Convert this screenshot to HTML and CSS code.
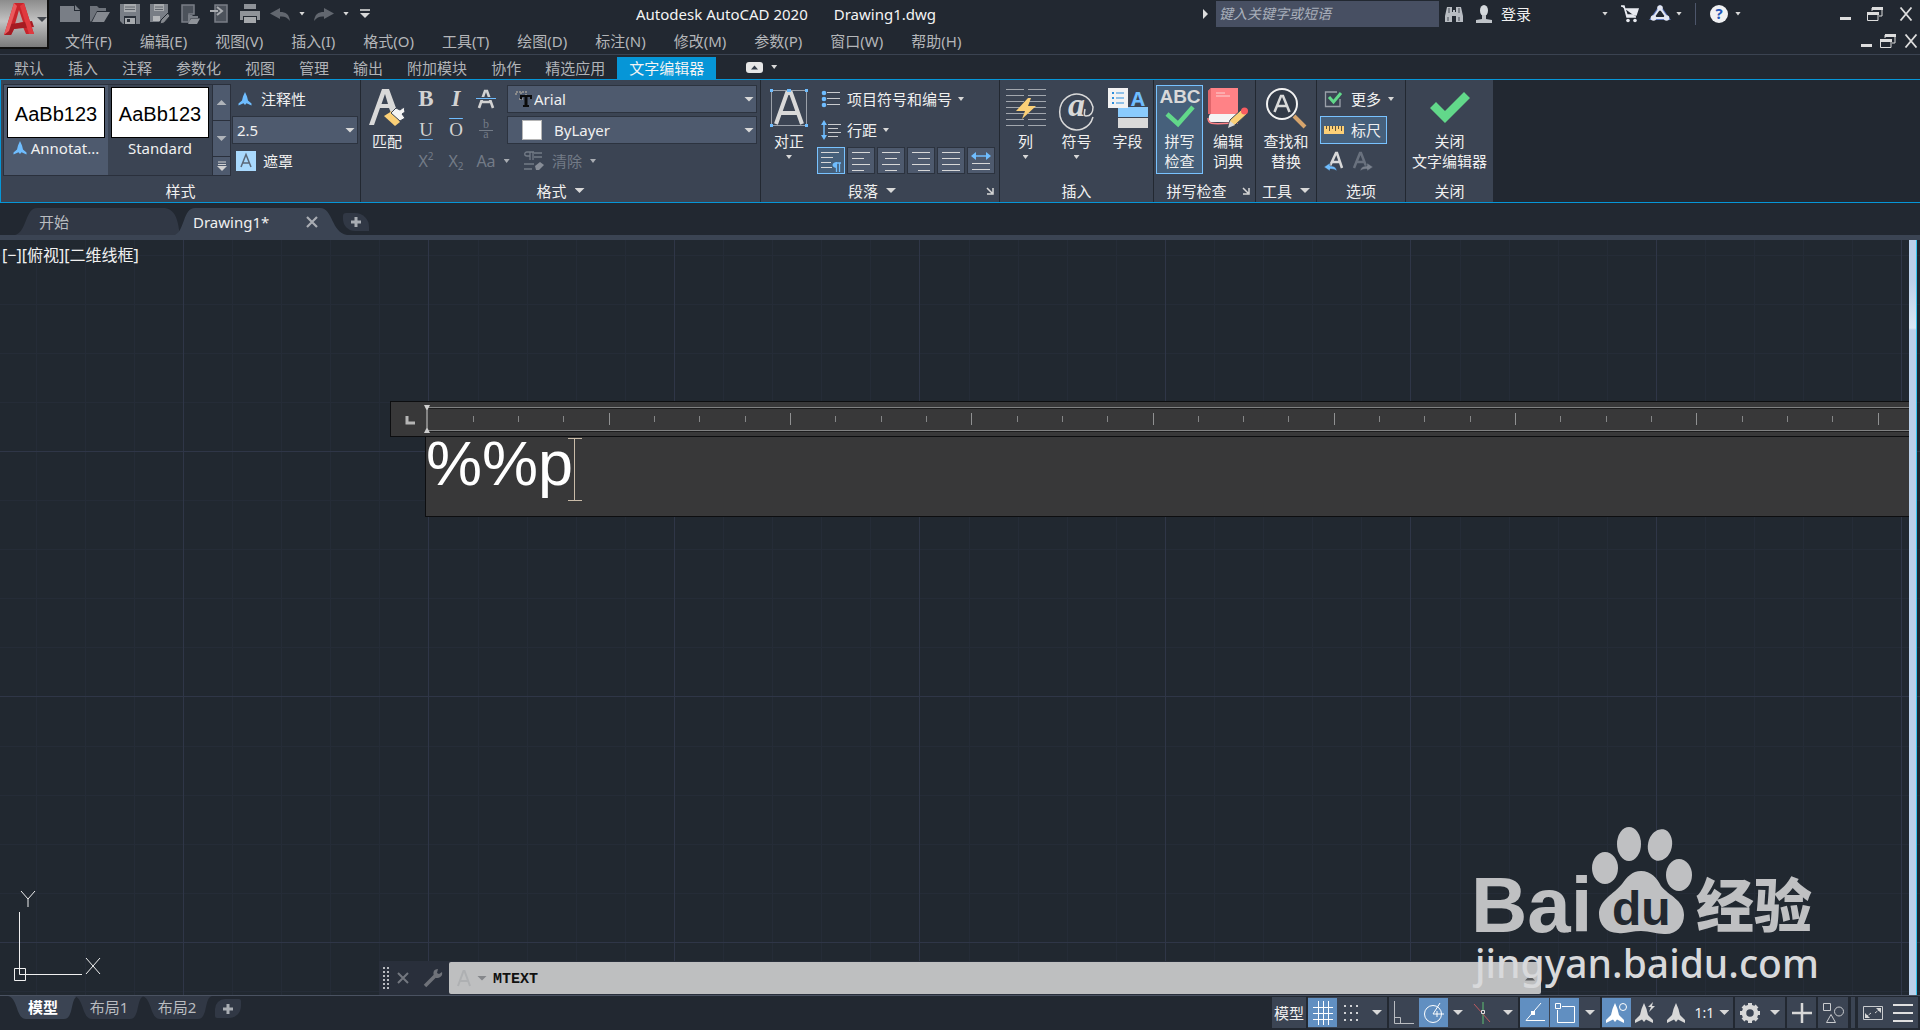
FILE: index.html
```html
<!DOCTYPE html>
<html lang="zh-CN">
<head>
<meta charset="utf-8">
<title>Autodesk AutoCAD 2020 - Drawing1.dwg</title>
<link rel="stylesheet" href="styles.css">
</head>
<body>
<svg class="defs" width="0" height="0" aria-hidden="true">
  <defs>
    <symbol id="i-anno" viewBox="0 0 14 14"><path d="M7 0L9 4.500L10 8.500L13.500 11.500V13.500L8.500 11.200L7 13L5.500 11.200L.5 13.500V11.500L4 8.500L5 4.500Z" fill="#6fbdff"/></symbol>
    <symbol id="i-person" viewBox="0 0 20 20"><path d="M10 0L12.500 6L14 12L19 17V20L12 16.500L10 19L8 16.500L1 20V17L6 12L7.500 6Z" fill="currentColor"/></symbol>
    <symbol id="i-restore" viewBox="0 0 16 14"><path d="M5 1H15V9H12M5 1V4" fill="none" stroke="#ddd" stroke-width="1"/><path d="M5 0H16V3H5Z" fill="#ddd"/><path d="M.5 6H11V13.500H.5Z" fill="none" stroke="#ddd"/><path d="M0 5H12V8H0Z" fill="#ddd"/></symbol>
    <symbol id="i-x" viewBox="0 0 14 14"><path d="M1.500 .5L12.500 13.500M12.500 .5L1.500 13.500" stroke="#ddd" stroke-width="1.800"/></symbol>
    <symbol id="i-launch" viewBox="0 0 8 8"><path d="M1 1L6 6M7 1V7H1" fill="none" stroke="#d8d8d8" stroke-width="1.500"/></symbol>
    <symbol id="i-plus" viewBox="0 0 12 12"><path d="M6 1V11M1 6H11" stroke="#a9adb3" stroke-width="3"/></symbol>
  </defs>
</svg>

<header class="top">
  <button class="app" aria-label="应用程序菜单">
    <svg width="32" height="36" viewBox="0 0 32 36"><path d="M10 1H20L30 32H22L19 25L10 27L7 33H0Z" fill="#c8242b"/><path d="M15 8L19 20L11 22Z" fill="#b4a5a5"/><path d="M0 33L7 22L28 19L30 25L10 27L7 33Z" fill="#a51b22"/><path d="M10 1L0 33L5 29L13 4Z" fill="#ea5a5d"/><path d="M20 1L30 32L25 32L16 4Z" fill="#e0393f"/></svg>
    <i class="arr wide dark"></i>
  </button>
  <div class="titlebar">
    <div class="qat">
      <button aria-label="新建"><svg width="20" height="20" viewBox="0 0 20 20"><path d="M0 2H14V7H20V18H0Z" fill="#797e86"/><path d="M15 1L20 6H15Z" fill="#797e86"/></svg></button>
      <button aria-label="打开"><svg width="20" height="20" viewBox="0 0 20 20"><path d="M0 17V2H7L9 4H16V7H7L1 18Z" fill="#6e737b"/><path d="M7 8H20L14 18H2Z" fill="#858990"/></svg></button>
      <button aria-label="保存"><svg width="20" height="20" viewBox="0 0 20 20"><path d="M0 0H20V20H3L0 17Z" fill="#797e86"/><path d="M4 0H16V8H4Z" fill="#a7aaae"/><path d="M5 3H15M5 5.500H15" stroke="#5e646c"/><path d="M4 12H16V20H4Z" fill="#2a3039"/><path d="M5 14H15V20H5Z" fill="#a7aaae"/><path d="M7 15H10V18H7Z" fill="#2a3039"/></svg></button>
      <button aria-label="另存为"><svg width="20" height="20" viewBox="0 0 20 20"><path d="M0 0H18V9L9 18H0Z" fill="#797e86"/><path d="M4 0H14V7H4Z" fill="#a7aaae"/><path d="M5 3H13M5 5.500H13" stroke="#5e646c"/><path d="M3 12H10V17H3Z" fill="#b5b7ba"/><path d="M10 20L11 16L18 9L20 12L14 19Z" fill="#85898f" stroke="#222831"/></svg></button>
      <button aria-label="从移动设备打开"><svg width="20" height="20" viewBox="0 0 20 20"><path d="M2 1H14V10H9V18H2Z" fill="#4c525b" stroke="#797e86" stroke-width="1.500"/><path d="M8 19V11H12L13 12H18V14H11Z" fill="#797e86"/><path d="M11 14.500H20L17 20H8Z" fill="#8f9399"/></svg></button>
      <button aria-label="保存到移动设备"><svg width="20" height="20" viewBox="0 0 20 20"><path d="M5 1H17V18H5Z" fill="#4c525b" stroke="#797e86" stroke-width="1.500"/><path d="M0 7H8" stroke="#a9acb0" stroke-width="2"/><path d="M7 3L12 7L7 11" fill="none" stroke="#a9acb0" stroke-width="2"/></svg></button>
      <button aria-label="打印"><svg width="20" height="20" viewBox="0 0 20 20"><path d="M4 0H16V5H4Z" fill="#8f9399"/><path d="M0 7H20V16H0Z" fill="#8f9399"/><path d="M3 12H17V20H3Z" fill="#222831"/><path d="M4 13H16V19H4Z" fill="#a5a8ac"/></svg></button>
      <button aria-label="放弃"><svg width="20" height="20" viewBox="0 0 20 20"><path d="M0 9.500L10 4V8C16 8 19 10 20 17C17 13 14 12 10 12.500V15Z" fill="#62676f"/></svg></button>
      <i class="arr"></i>
      <button aria-label="重做"><svg width="20" height="20" viewBox="0 0 20 20"><path d="M20 9.500L10 4V8C4 8 1 10 0 17C3 13 6 12 10 12.500V15Z" fill="#62676f"/></svg></button>
      <i class="arr"></i>
      <button class="more" aria-label="自定义快速访问工具栏"><svg width="10" height="10" viewBox="0 0 10 10"><path d="M0 1H10" stroke="#d8d8d8" stroke-width="1.600"/><path d="M0 4H10L5 9Z" fill="#d8d8d8"/></svg></button>
    </div>
    <div class="title"><span>Autodesk AutoCAD 2020</span><span>Drawing1.dwg</span></div>
    <div class="info">
      <svg width="5" height="10" viewBox="0 0 5 10"><path d="M0 0L5 5L0 10Z" fill="#ddd"/></svg>
      <input class="search" type="text" placeholder="键入关键字或短语" aria-label="搜索">
      <button aria-label="搜索"><svg width="20" height="18" viewBox="0 0 20 18"><path d="M3 2H8V7H9V5H11V7H12V2H17L19 11V17H12V11H8V17H1V11Z" fill="#b8bcc2"/><path d="M5 3V8M15 3V8M4 12V16M15 12V16" stroke="#454b55"/></svg></button>
      <button class="login"><svg width="18" height="18" viewBox="0 0 18 18"><ellipse cx="9" cy="5.500" rx="4" ry="5.500" fill="#d5d9dd"/><path d="M7 10H11V14L17 15V18H1V15L7 14Z" fill="#bfc3c8"/></svg>登录</button>
      <i class="arr"></i>
      <button class="cart" aria-label="应用商店"><svg width="20" height="18" viewBox="0 0 20 18"><path d="M1 1H4L7 12H16M5 4H18L16 10H7Z" fill="#e8eaf0" stroke="#e8eaf0" stroke-width="1.500"/><circle cx="8" cy="15.500" r="1.800" fill="#e8eaf0"/><circle cx="15" cy="15.500" r="1.800" fill="#e8eaf0"/></svg></button>
      <button aria-label="保持连接"><svg width="20" height="18" viewBox="0 0 20 18"><path d="M10 3L3 13H17Z" fill="none" stroke="#5e78c0" stroke-width="4"/><path d="M10 3L3 13H17Z" fill="#222831" stroke="#e2e6f2" stroke-width="2"/><circle cx="10" cy="3" r="2.800" fill="#e2e6f2"/><circle cx="3.500" cy="13" r="2.800" fill="#e2e6f2"/><circle cx="16.500" cy="13" r="2.800" fill="#e2e6f2"/></svg></button>
      <i class="arr"></i>
      <span class="sep"></span>
      <button aria-label="帮助"><svg width="20" height="20" viewBox="0 0 20 20"><circle cx="10" cy="10" r="9" fill="#f0f1f3"/><text x="10" y="15" font-size="15" font-weight="700" text-anchor="middle" fill="#2456b8">?</text></svg></button>
      <i class="arr"></i>
      <div class="win">
        <button aria-label="最小化"><span class="min"></span></button>
        <button aria-label="还原"><svg width="16" height="14"><use href="#i-restore"/></svg></button>
        <button aria-label="关闭"><svg width="14" height="14"><use href="#i-x"/></svg></button>
      </div>
    </div>
  </div>
  <nav class="menubar">
    <a href="#">文件(F)</a><a href="#">编辑(E)</a><a href="#">视图(V)</a><a href="#">插入(I)</a><a href="#">格式(O)</a><a href="#">工具(T)</a><a href="#">绘图(D)</a><a href="#">标注(N)</a><a href="#">修改(M)</a><a href="#">参数(P)</a><a href="#">窗口(W)</a><a href="#">帮助(H)</a>
    <div class="win doc">
      <button aria-label="最小化图形"><span class="min"></span></button>
      <button aria-label="还原图形"><svg width="16" height="14"><use href="#i-restore"/></svg></button>
      <button aria-label="关闭图形"><svg width="14" height="14"><use href="#i-x"/></svg></button>
    </div>
  </nav>
</header>

<nav class="rtabs">
  <a href="#">默认</a><a href="#">插入</a><a href="#">注释</a><a href="#">参数化</a><a href="#">视图</a><a href="#">管理</a><a href="#">输出</a><a href="#">附加模块</a><a href="#">协作</a><a href="#">精选应用</a><a href="#" class="on">文字编辑器</a>
  <button class="collapse" aria-label="最小化功能区"><svg width="17" height="11" viewBox="0 0 17 11"><rect width="17" height="11" rx="3" fill="#e6e6e6"/><path d="M5 7.500L8.500 3.500L12 7.500Z" fill="#333b47"/></svg><i class="arr"></i></button>
</nav>

<section class="ribbon">
  <div class="panel p-style">
    <div class="body">
      <div class="gallery">
        <button class="sample on"><b>AaBb123</b><span><svg width="14" height="14"><use href="#i-anno"/></svg>Annotat...</span></button>
        <button class="sample"><b>AaBb123</b><span>Standard</span></button>
        <div class="gscroll">
          <button aria-label="上一行"><i class="arr wide up"></i></button>
          <button aria-label="下一行"><i class="arr wide grey"></i></button>
          <button aria-label="更多样式"><svg width="10" height="10" viewBox="0 0 10 10"><path d="M1 1H9M1 3.500H9" stroke="#d0d0d0"/><path d="M0 5H10L5 10Z" fill="#d0d0d0"/></svg></button>
        </div>
      </div>
      <div class="stylecol">
        <button class="line"><svg width="14" height="14"><use href="#i-anno"/></svg>注释性</button>
        <label class="combo"><select aria-label="文字高度"><option>2.5</option></select><i class="arr wide"></i></label>
        <button class="line mask"><svg width="20" height="20" viewBox="0 0 20 20"><rect width="20" height="20" fill="#a9d9fd"/><path d="M5 16L10 3.500L15 16M6.500 12H13.500" fill="none" stroke="#5b6878" stroke-width="1.500"/></svg>遮罩</button>
      </div>
    </div>
    <h2>样式</h2>
  </div>

  <div class="panel p-format">
    <div class="body">
      <button class="big match"><svg width="36" height="40" viewBox="0 0 36 40"><path d="M0 37L13 1H20L27 20L22 25L20 20H11L5 37ZM12.500 16H19L16 6Z" fill="#d9d9d9"/><path d="M15 28L23 23L31 34L26 38Z" fill="#fbd077"/><path d="M22 25L27 20L31 22L35 19L36 24L33 26L36 30L31 33Z" fill="#f4f4f4" stroke="#3b4453"/></svg>匹配</button>
      <div class="fgrid">
        <div class="frow">
          <button class="ch bold">B</button><button class="ch ital">I</button>
          <button class="ch" aria-label="删除线"><svg width="22" height="20" viewBox="0 0 22 20"><path d="M4 19L10 2H12L18 19M7 13H15" fill="none" stroke="#d2d2d2" stroke-width="2.600"/><path d="M0 9.500H22" stroke="#3b4453" stroke-width="3"/><path d="M1 9.500H21" stroke="#6fbdff"/></svg></button>
          <label class="combo font"><svg width="18" height="18" viewBox="0 0 18 18"><path d="M1 5V2H11V5M6 2V9M4 9H8" fill="none" stroke="#8b8b8b" stroke-width="2" stroke-dasharray="2 1"/><path d="M5 5H17V9H15V7H12.500V15H14V17H8V15H9.500V7H7V9H5Z" fill="#0b0b0b"/></svg><select aria-label="字体"><option>Arial</option></select><i class="arr wide"></i></label>
        </div>
        <div class="frow">
          <button class="ch under">U</button><button class="ch over">O</button>
          <button class="ch frac" aria-label="堆叠"><svg width="16" height="24" viewBox="0 0 16 24"><text x="8" y="10" font-size="12" font-family="Liberation Serif" text-anchor="middle" fill="#737b87">b</text><path d="M1 12.500H15" stroke="#737b87"/><text x="8" y="20" font-size="12" font-family="Liberation Serif" text-anchor="middle" fill="#737b87">a</text></svg></button>
          <label class="combo color"><span class="swatch"></span><select aria-label="颜色"><option>ByLayer</option></select><i class="arr wide"></i></label>
        </div>
        <div class="frow off">
          <button class="ch">X<sup>2</sup></button><button class="ch">X<sub>2</sub></button>
          <button class="ch case">Aa<i class="arr"></i></button>
          <button class="clear"><svg width="20" height="20" viewBox="0 0 20 20"><path d="M6 1V9M9 1V9M10 1H3C0 1 0 5 3 5H6M10 2H18M10 6H18M0 13H10M0 18H8" fill="none" stroke="#737b87" stroke-width="1.300"/><path d="M11 15L16 11L20 14L15 19H12Z" fill="#878d97"/></svg>清除<i class="arr"></i></button>
        </div>
      </div>
    </div>
    <h2>格式<i class="arr wide"></i></h2>
  </div>

  <div class="panel p-para">
    <div class="body">
      <button class="big just"><svg width="40" height="40" viewBox="0 0 40 40"><path d="M2.500 2.500H37.500V37.500H2.500Z" fill="none" stroke="#9aa0a9"/><path d="M7 36L18 5H22L33 36M11.500 25H28.500" fill="none" stroke="#d9d9d9" stroke-width="4"/><path d="M1 1H4V4H1ZM18 1H22V4H18ZM36 1H39V4H36ZM1 36H4V39H1ZM36 36H39V39H36Z" fill="#6fbdff"/></svg>对正<i class="arr"></i></button>
      <div class="pcol">
        <button class="line"><svg width="20" height="18" viewBox="0 0 20 18"><circle cx="3" cy="3" r="2.300" fill="#6fbdff"/><circle cx="3" cy="9" r="2.300" fill="#6fbdff"/><circle cx="3" cy="15" r="2.300" fill="#6fbdff"/><path d="M6 2.500H19M6 8.500H19M6 14.500H19" stroke="#c9cbce"/></svg>项目符号和编号<i class="arr"></i></button>
        <button class="line"><svg width="20" height="20" viewBox="0 0 20 20"><path d="M3 3V17" stroke="#6fbdff" stroke-width="1.500"/><path d="M0 5L3 0L6 5ZM0 15L3 20L6 15Z" fill="#6fbdff"/><path d="M7 4.500H20M7 8.500H17M7 12.500H20M7 16.500H17" stroke="#c9cbce"/></svg>行距<i class="arr"></i></button>
        <div class="aligns">
          <button class="on" aria-label="默认"><svg width="22" height="22" viewBox="0 0 22 22"><path d="M1 2.500H19M1 7.500H13M1 12.500H11M1 17.500H12" stroke="#d8d8d8"/><path d="M16.500 13V22M19.500 13V22M21 13H16" fill="none" stroke="#6fbdff" stroke-width="1.300"/><path d="M17 12V18C11 18 11 12 17 12Z" fill="#6fbdff"/></svg></button>
          <button aria-label="左对齐"><svg width="22" height="22" viewBox="0 0 22 22"><path d="M2 2.500H20M2 8.500H14M2 14.500H20M2 20.500H14" stroke="#d8d8d8"/></svg></button>
          <button aria-label="居中"><svg width="22" height="22" viewBox="0 0 22 22"><path d="M2 2.500H20M5 8.500H17M2 14.500H20M5 20.500H17" stroke="#d8d8d8"/></svg></button>
          <button aria-label="右对齐"><svg width="22" height="22" viewBox="0 0 22 22"><path d="M2 2.500H20M8 8.500H20M2 14.500H20M8 20.500H20" stroke="#d8d8d8"/></svg></button>
          <button aria-label="对正"><svg width="22" height="22" viewBox="0 0 22 22"><path d="M2 2.500H20M2 8.500H20M2 14.500H20M2 20.500H20" stroke="#d8d8d8"/></svg></button>
          <button aria-label="分散对齐"><svg width="22" height="22" viewBox="0 0 22 22"><path d="M3 6H19" stroke="#6fbdff" stroke-width="1.500"/><path d="M1 6L6 2V10ZM21 6L16 2V10Z" fill="#6fbdff"/><path d="M2 13.500H20M2 19.500H20" stroke="#d8d8d8"/></svg></button>
        </div>
      </div>
    </div>
    <h2>段落<i class="arr wide"></i><svg class="launch" width="8" height="8"><use href="#i-launch"/></svg></h2>
  </div>

  <div class="panel p-insert">
    <div class="body">
      <button class="big"><svg width="40" height="40" viewBox="0 0 40 40"><path d="M0 1.500H18M22 1.500H40M0 7.500H18M22 7.500H40M0 13.500H18M22 13.500H40M0 19.500H18M22 19.500H40M0 25.500H18M22 25.500H40M0 31.500H18M22 31.500H40M0 37.500H18M22 37.500H40" stroke="#a2a7ae"/><path d="M22 10L10 23H19L16 31L30 18H22L25 10Z" fill="#fbd077"/></svg>列<i class="arr"></i></button>
      <button class="big"><svg width="40" height="40" viewBox="0 0 40 40"><path d="M36 29A17 18 0 1 1 36 19C36 25 33 28 29 28C27 28 27 26 28 21" fill="none" stroke="#d9d9d9" stroke-width="1.500"/><text x="11" y="28" font-family="Liberation Serif" font-size="34" font-weight="700" font-style="italic" fill="#d9d9d9">a</text></svg>符号<i class="arr"></i></button>
      <button class="big"><svg width="40" height="40" viewBox="0 0 40 40"><path d="M0 0H20V20H0Z" fill="#f2f2f2"/><path d="M4 4H6V6H4ZM4 9H6V11H4ZM4 14H6V16H4Z" fill="#2d8fdd"/><path d="M8 5H16M8 10H16M8 15H16" stroke="#2d8fdd"/><text x="30" y="18" font-size="20" font-weight="700" text-anchor="middle" fill="#6fbdff">A</text><path d="M10 19H40V29H10Z" fill="#8acbfd"/><path d="M10 30H40V40H10Z" fill="#d9d9d9"/><path d="M20 19H10V20H20Z" fill="#f2f2f2"/></svg>字段</button>
    </div>
    <h2>插入</h2>
  </div>

  <div class="panel p-spell">
    <div class="body">
      <button class="big on"><svg width="42" height="40" viewBox="0 0 42 40"><text x="21" y="15" font-size="19" font-weight="700" font-family="Liberation Sans" text-anchor="middle" fill="#d9d9d9">ABC</text><path d="M8 26L19 36L34 19" fill="none" stroke="#62d88a" stroke-width="4.500"/></svg><span>拼写<br>检查</span></button>
      <button class="big"><svg width="40" height="40" viewBox="0 0 40 40"><path d="M3 0H30V26H0V3Z" fill="#ff8286"/><path d="M3 0V26H0V3Z" fill="#e0666b"/><path d="M3 26H30V34H3C0 34 0 26 3 26Z" fill="#f4f4f4"/><path d="M0 30C0 37 3 36 30 35" fill="none" stroke="#ff8286" stroke-width="1.500"/><path d="M8 5H17M8 8H22" stroke="#fbd3d4"/><path d="M20 39L22 32L34 21L39 26L27 37Z" fill="#fbd077" stroke="#3b4453"/><path d="M20 40L22 33L27 37Z" fill="#d9d9d9"/><circle cx="36.500" cy="23" r="3.500" fill="#fa5c60"/></svg><span>编辑<br>词典</span></button>
    </div>
    <h2>拼写检查<svg class="launch" width="8" height="8"><use href="#i-launch"/></svg></h2>
  </div>

  <div class="panel p-tools">
    <div class="body">
      <button class="big"><svg width="40" height="40" viewBox="0 0 40 40"><path d="M28 28L39 39" stroke="#d6a46c" stroke-width="4"/><circle cx="16" cy="16" r="15" fill="#323a47" stroke="#f2f2f2" stroke-width="2"/><path d="M8.500 24L15 8H17L23.500 24M11.500 18H20.500" fill="none" stroke="#d9d9d9" stroke-width="2.500"/></svg><span>查找和<br>替换</span></button>
    </div>
    <h2>工具<i class="arr wide"></i></h2>
  </div>

  <div class="panel p-opt">
    <div class="body">
      <button class="line"><svg width="20" height="18" viewBox="0 0 20 18"><path d="M13 2H1.500V16.500H16V9" fill="none" stroke="#9aa0a9" stroke-width="1.300"/><path d="M5 7L9.500 12L17 3" fill="none" stroke="#62d88a" stroke-width="3"/></svg>更多<i class="arr"></i></button>
      <button class="line on"><svg width="20" height="10" viewBox="0 0 20 10"><path d="M0 1H20V9H0Z" fill="#fbd077"/><path d="M2.500 1V4M5.500 1V6M8.500 1V4M11.500 1V6M14.500 1V4M17.500 1V6" stroke="#5b5440"/></svg>标尺</button>
      <div class="undo">
        <button aria-label="放弃"><svg width="20" height="20" viewBox="0 0 20 20"><path d="M6 15L12 2H13L18 17M8 11H16" fill="none" stroke="#d9d9d9" stroke-width="2.500"/><path d="M0 16L6 12V15C10 15 12 16 13 20C10 18 8 18 6 18V20Z" fill="#6fbdff" stroke="#3b4453" stroke-width=".5"/></svg></button>
        <button aria-label="重做"><svg width="20" height="20" viewBox="0 0 20 20"><path d="M1 17L7 2H8L13 15M4 11H11" fill="none" stroke="#69717e" stroke-width="2.500"/><path d="M20 16L14 12V15C10 15 8 16 7 20C10 18 12 18 14 18V20Z" fill="#7a818d" stroke="#3b4453" stroke-width=".5"/></svg></button>
      </div>
    </div>
    <h2>选项</h2>
  </div>

  <div class="panel p-close">
    <div class="body">
      <button class="big"><svg width="40" height="40" viewBox="0 0 40 40"><path d="M0 20L6 14L15 23L34 4L40 10L15 35Z" fill="#62d88a"/></svg><span>关闭<br>文字编辑器</span></button>
    </div>
    <h2>关闭</h2>
  </div>
</section>

<div class="ftabs">
  <div class="ftab start"><a href="#">开始</a></div>
  <div class="ftab on"><a href="#">Drawing1*</a><button aria-label="关闭"><svg width="12" height="12" viewBox="0 0 12 12"><path d="M1 1L11 11M11 1L1 11" stroke="#a9adb3" stroke-width="2.200"/></svg></button></div>
  <button class="add" aria-label="新图形"><svg width="12" height="12"><use href="#i-plus"/></svg></button>
</div>

<main class="canvas">
  <svg class="grid" width="100%" height="100%" aria-hidden="true">
    <defs><pattern id="g" x="183" y="211" width="491" height="491" patternUnits="userSpaceOnUse">
      <path d="M49 0h1v491h-1zM98 0h1v491h-1zM147 0h1v491h-1zM196 0h1v491h-1zM295 0h1v491h-1zM344 0h1v491h-1zM393 0h1v491h-1zM442 0h1v491h-1zM0 49h491v1H0zM0 98h491v1H0zM0 147h491v1H0zM0 196h491v1H0zM0 295h491v1H0zM0 344h491v1H0zM0 393h491v1H0zM0 442h491v1H0z" fill="#252c37"/>
      <path d="M0 0h1v491h-1zM245 0h1v491h-1zM0 0h491v1H0zM0 245h491v1H0z" fill="#2f3647"/></pattern></defs>
    <rect width="100%" height="100%" fill="url(#g)"/>
  </svg>
  <div class="viewlabel">[−][俯视][二维线框]</div>

  <div class="editor">
    <div class="ruler">
      <svg width="100%" height="34" aria-hidden="true">
        <defs><pattern id="t" x="37" y="0" width="725" height="34" patternUnits="userSpaceOnUse">
          <path d="M0 11h1v12h-1zM181 11h1v12h-1zM362 11h1v12h-1zM543 11h1v12h-1z" fill="#909192"/>
          <path d="M45 14h1v6h-1zM90 14h1v6h-1zM135 14h1v6h-1zM226 14h1v6h-1zM271 14h1v6h-1zM317 14h1v6h-1zM407 14h1v6h-1zM453 14h1v6h-1zM498 14h1v6h-1zM589 14h1v6h-1zM634 14h1v6h-1zM679 14h1v6h-1z" fill="#858687"/></pattern></defs>
        <path d="M16 14V21H24" fill="none" stroke="#b5b5b5" stroke-width="3"/>
        <rect x="37" y="5" width="100%" height="1" fill="#808182"/><rect x="37" y="6" width="100%" height="1" fill="#1c1c1d"/>
        <rect x="37" y="28" width="100%" height="1" fill="#808182"/><rect x="37" y="29" width="100%" height="1" fill="#1c1c1d"/>
        <rect x="38" y="0" width="100%" height="34" fill="url(#t)"/>
        <path d="M33 3H39L36.500 8V26L39 31H33L35.500 26V8Z" fill="#cfcfcf"/>
      </svg>
    </div>
    <div class="mtext"><span>%%p</span><svg width="14" height="63" viewBox="0 0 14 63"><path d="M0 .5H14M6.500 .5V62.500M0 62.500H14" fill="none" stroke="#c9bba8"/></svg></div>
  </div>

  <svg class="ucs" width="92" height="92" viewBox="0 0 92 92" aria-label="UCS"><path d="M7.500 22V84.500H70M2.500 78.500H13.500V90.500H2.500ZM9 1L16 9L23 1M16 9V17M74 68L88 84M88 68L74 84" fill="none" stroke="#f0f0f0"/></svg>

  <div class="cmd">
    <svg width="6" height="22" viewBox="0 0 6 22"><path d="M1 0V22M5 0V22" stroke="#b9bbc0" stroke-width="2" stroke-dasharray="2 2"/></svg>
    <button aria-label="关闭命令行"><svg width="12" height="12" viewBox="0 0 12 12"><path d="M1 1L11 11M11 1L1 11" stroke="#73777f" stroke-width="2"/></svg></button>
    <button aria-label="自定义"><svg width="20" height="20" viewBox="0 0 20 20"><path d="M2 18L12 8" stroke="#6f7279" stroke-width="3.500"/><path d="M15 1C10 1 10 5 11 8L13 10C17 10 20 8 19 4L16 6L14 5Z" fill="#6f7279"/></svg></button>
    <div class="cmdbox">
      <svg width="14" height="17" viewBox="0 0 14 17"><path d="M1 16L6.500 1H7.500L13 16M3 11H11" fill="none" stroke="#aeb0b2" stroke-width="2"/></svg>
      <i class="arr wide mid"></i>
      <input type="text" value="MTEXT" aria-label="命令">
      <i class="arr wide up dim"></i>
    </div>
  </div>

  <svg class="mark" width="352" height="170" viewBox="0 0 352 170">
    <g fill="#bfc0c2">
      <text x="1" y="112" font-family="Liberation Sans" font-weight="700" font-size="78">Bai</text>
      <ellipse cx="135" cy="48" rx="13" ry="16"/><ellipse cx="159" cy="24" rx="12" ry="17"/><ellipse cx="190" cy="25" rx="12" ry="16" transform="rotate(12 190 25)"/><ellipse cx="209" cy="55" rx="13" ry="16"/>
      <path d="M171 51C181 51 187 58 191 66C199 76 214 80 214 95C214 106 206 115 194 114C186 114 180 111 171 111C162 111 156 114 148 113C136 113 129 104 129 94C129 80 144 74 152 64C157 57 162 51 171 51Z"/>
      <text x="226" y="107" font-family="Noto Sans CJK SC" font-weight="900" font-size="58">经验</text>
    </g>
    <text x="142" y="105" font-family="Liberation Sans" font-weight="700" font-size="48" fill="#222830">du</text>
    <text x="5" y="158" font-family="Noto Sans" font-weight="500" font-size="39" fill="#d8d9db">jingyan.baidu.com</text>
  </svg>
  <div class="vscroll"></div>
</main>

<footer class="status">
  <div class="ltabs">
    <a href="#" class="on">模型</a><a href="#">布局1</a><a href="#">布局2</a>
    <button class="add" aria-label="新建布局"><svg width="12" height="12"><use href="#i-plus"/></svg></button>
  </div>
  <div class="tools">
    <div class="grp"><button class="model">模型</button></div>
    <div class="grp"><button class="on" aria-label="栅格"><svg width="20" height="24" viewBox="0 0 20 24"><path d="M5.500 0V24M10.500 0V24M15.500 0V24M0 6.500H20M0 12.500H20M0 18.500H20" stroke="#fff"/></svg></button>
      <button aria-label="捕捉"><svg width="18" height="18" viewBox="0 0 18 18"><path d="M1 2H17M1 9H17M1 16H17" stroke="#d0d2d5" stroke-width="2" stroke-dasharray="2 4"/></svg></button><button class="dd" aria-label="捕捉设置"><i class="arr wide"></i></button></div>
    <div class="grp"><button aria-label="正交"><svg width="22" height="24" viewBox="0 0 22 24"><path d="M1.500 0V22.500H21M1.500 16.500H7.500V22" fill="none" stroke="#b9bcc1"/></svg></button>
      <button class="on" aria-label="极轴追踪"><svg width="22" height="22" viewBox="0 0 22 22"><circle cx="10" cy="12" r="8.500" fill="none" stroke="#fff"/><path d="M10 12H21M10 12L17 1M14 9V15" fill="none" stroke="#fff"/></svg></button><button class="dd" aria-label="极轴设置"><i class="arr wide"></i></button>
      <button aria-label="等轴测草图"><svg width="20" height="22" viewBox="0 0 20 22"><path d="M10 0V22" stroke="#5fbf73"/><path d="M1 2L17 20" stroke="#c05a60"/><path d="M8.500 8.500H11.500V11.500H8.500Z" fill="#3b4453" stroke="#ddd"/></svg></button><button class="dd" aria-label="等轴测设置"><i class="arr wide"></i></button></div>
    <div class="grp tight"><button class="on" aria-label="对象捕捉追踪"><svg width="22" height="22" viewBox="0 0 22 22"><path d="M17 1L2 18.500H21" fill="none" stroke="#fff"/><path d="M7 9H11V13H7Z" fill="#fff"/></svg></button>
      <button class="on" aria-label="对象捕捉"><svg width="22" height="22" viewBox="0 0 22 22"><path d="M8 4.500H20.500V20.500H3.500V8" fill="none" stroke="#fff"/><path d="M1.500 1.500H6.500V6.500H1.500Z" fill="none" stroke="#fff"/></svg></button><button class="dd" aria-label="捕捉选项"><i class="arr wide"></i></button></div>
    <div class="grp"><button class="on" aria-label="注释可见性"><svg width="24" height="22" viewBox="0 0 24 22"><svg y="1" width="20" height="20"><use href="#i-person"/></svg><circle cx="18" cy="5" r="3.500" fill="none" stroke="#fff"/></svg></button>
      <button aria-label="自动缩放"><svg width="24" height="22" viewBox="0 0 24 22"><svg y="1" width="20" height="20"><use href="#i-person"/></svg><path d="M19 0L14 5H17L15 10L21 4H18Z" fill="#d8d8d8"/></svg></button>
      <button aria-label="注释"><svg width="20" height="20"><use href="#i-person"/></svg></button>
      <button class="scale">1:1<i class="arr wide"></i></button></div>
    <div class="grp"><button aria-label="切换工作空间"><svg width="22" height="22" viewBox="0 0 22 22"><circle cx="11" cy="11" r="6" fill="none" stroke="#d8d8d8" stroke-width="4.500"/><path d="M11 1V4M11 18V21M1 11H4M18 11H21M4 4L6 6M16 16L18 18M18 4L16 6M6 16L4 18" stroke="#d8d8d8" stroke-width="4"/></svg></button><button class="dd" aria-label="工作空间设置"><i class="arr wide"></i></button></div>
    <div class="grp"><button class="mon" aria-label="注释监视器"><svg width="20" height="20" viewBox="0 0 20 20"><path d="M10 0V20M0 10H20" stroke="#d8d8d8" stroke-width="2.500"/></svg></button></div>
    <div class="grp"><button aria-label="隔离对象"><svg width="22" height="22" viewBox="0 0 22 22"><path d="M1.500 1.500H8.500V8.500H1.500ZM4.500 20.500H13.500L9 12.500Z" fill="none" stroke="#c9cbce"/><circle cx="17" cy="9.500" r="4.500" fill="none" stroke="#c9cbce"/></svg></button></div>
    <div class="grp sliver"></div>
    <div class="grp"><button aria-label="全屏显示"><svg width="22" height="16" viewBox="0 0 22 16"><path d="M1.500 1.500H20.500V14.500H1.500Z" fill="none" stroke="#c9cbce"/><path d="M14 3H19V8ZM3 8V13H8Z" fill="#d8d8d8"/><path d="M18 4L13 8M4 12L9 8" stroke="#d8d8d8" stroke-dasharray="3 1"/></svg></button>
      <button aria-label="自定义"><svg width="20" height="18" viewBox="0 0 20 18"><path d="M0 1H20M0 9H20M0 17H20" stroke="#e0e0e0" stroke-width="2"/></svg></button></div>
  </div>
</footer>
</body>
</html>
```

FILE: styles.css
```css
* { box-sizing: border-box; }
html, body { height: 100%; }
body {
  margin: 0;
  display: flex;
  flex-direction: column;
  background: #222831;
  color: #f0f0f0;
  font: 15px/20px "Noto Sans", "Noto Sans CJK SC", sans-serif;
  font-weight: 400;
  overflow: hidden;
  white-space: nowrap;
}
button, input, select { font: inherit; color: inherit; background: none; border: 0; padding: 0; margin: 0; }
a { color: inherit; text-decoration: none; }
svg { display: block; flex: none; overflow: visible; }
.defs { position: absolute; }
h2 { margin: 0; font-size: 15px; font-weight: 400; line-height: 20px; }

.arr { flex: none; display: block; width: 6px; height: 4px; background: #d8d8d8; clip-path: polygon(0 0, 100% 0, 50% 100%); }
.arr.wide { width: 10px; height: 5px; }
.arr.up { clip-path: polygon(0 100%, 100% 100%, 50% 0); background: #b0b4ba; }
.arr.grey { background: #b0b4ba; }
.arr.dark { background: #43474e; }
.arr.mid { background: #85878a; }
.arr.dim { background: #5a5c5e; }

/* title and menu */
.top { display: grid; grid-template-columns: 49px 1fr; grid-template-rows: 27px 27px; border-bottom: 1px solid #3b4351; flex: none; }
.app { grid-row: 1 / 3; width: 49px; height: 49px; display: flex; align-items: center; gap: 1px; padding: 0 2px 8px 4px; background: linear-gradient(#8c8c8c, #c2c2c2 45%, #7b7b7b); border-right: 2px solid #111; border-bottom: 2px solid #111; }
.titlebar { display: grid; grid-template-columns: 587px 1fr 720px; align-items: center; }
.qat { display: flex; align-items: center; gap: 10px; padding-left: 11px; }
.qat .arr { margin: 0 -1px; }
.qat .more { margin-left: 2px; }
.title { display: flex; gap: 26px; color: #f4f4f4; }
.info { display: flex; align-items: center; height: 27px; padding-left: 3px; }
.search { width: 223px; height: 26px; margin: 0 5px 0 8px; padding: 0 3px; background: #474f62; font-size: 14px; font-style: italic; }
.search::placeholder { color: #a9afbb; opacity: 1; }
.login { display: flex; align-items: center; gap: 8px; margin: 0 71px 0 11px; }
.cart { margin: 0 10px 0 12px; }
.info button + .arr { margin-left: 6px; }
.info .login + .arr { margin-left: 0; }
.sep { width: 1px; height: 22px; background: #4d566b; margin: 0 13px; }
.win { display: flex; align-items: center; gap: 16px; margin-left: auto; padding-right: 7px; }
.min { display: block; width: 11px; height: 3px; background: #ddd; margin-top: 10px; }
.menubar { display: flex; align-items: center; gap: 28px; padding-left: 16px; color: #b4b6b9; }
.doc { gap: 8px; padding-right: 2px; }

/* ribbon tabs */
.rtabs { display: flex; height: 25px; flex: none; padding: 2px 0 0 2px; border-bottom: 1px solid #0696d7; color: #b0b3b7; align-items: stretch; }
.rtabs a { padding: 1px 12px; height: 22px; }
.rtabs .on { background: #0696d7; color: #f4f4f4; }
.collapse { display: flex; align-items: center; gap: 8px; margin-left: 30px; padding-bottom: 2px; }

/* ribbon */
.ribbon { display: flex; flex: none; height: 123px; border-bottom: 1px solid #0696d7; border-left: 1px solid #0696d7; }
.panel { display: flex; flex-direction: column; background: #3b4453; border-right: 1px solid #222831; }
.body { display: flex; height: 99px; }
.panel h2 { display: flex; align-items: center; justify-content: center; gap: 8px; flex: 1; position: relative; }
.launch { position: absolute; right: 5px; top: 8px; }
.p-style { width: 360px; }
.p-format { width: 400px; }
.p-para { width: 239px; }
.p-insert { width: 154px; }
.p-spell { width: 102px; }
.p-tools { width: 61px; }
.p-opt { width: 89px; }
.p-close { width: 88px; }
.p-para h2, .p-spell h2 { padding-right: 16px; }

.gallery { display: flex; width: 228px; height: 92px; margin: 4px 0 0 2px; border: 1px solid #2a303c; }
.sample { width: 104px; padding: 2px 3px; display: flex; flex-direction: column; align-items: stretch; }
.sample.on { background: #4e5a6e; }
.sample b { display: block; height: 51px; background: #fff; border: 1px solid #000; color: #000; font: 20px/52px "Liberation Sans", sans-serif; text-align: center; }
.sample span { display: flex; justify-content: center; align-items: center; gap: 4px; height: 20px; }
.gscroll { display: grid; grid-template-rows: 35px 35px 1fr; gap: 1px; flex: 1; background: #2a303c; padding-left: 1px; }
.gscroll button { background: #4e5a6e; display: grid; place-items: center; }
.stylecol { display: grid; grid-template-rows: 28px 28px 28px; gap: 3px; margin-top: 5px; width: 126px; margin-left: 1px; }
.line { display: flex; align-items: center; gap: 9px; padding: 0 6px; }
.mask { padding-left: 4px; gap: 7px; }

.combo { display: flex; align-items: center; height: 28px; background: #4e5a6e; border: 1px solid #2c333f; padding: 0 2px 0 4px; }
.combo select { appearance: none; flex: 1; min-width: 0; height: 26px; }
.font { gap: 1px; padding-left: 7px; }
.color { padding-left: 14px; gap: 12px; }
.swatch { width: 20px; height: 20px; background: #fff; border: 1px solid #b5b5b5; }
.fgrid { display: grid; grid-template-rows: 28px 28px 28px; gap: 3px; margin-top: 5px; flex: 1; padding-right: 3px; }
.frow { display: flex; align-items: center; }
.frow .combo { flex: 1; margin-left: 6px; }
.ch { width: 30px; height: 28px; display: flex; align-items: center; justify-content: center; color: #d2d2d2; }
.bold { font: 700 23px/24px "Liberation Serif", serif; }
.ital { font: italic 700 23px/24px "Liberation Serif", serif; }
.under { font: 19px/20px "Liberation Serif", serif; text-decoration: underline; text-decoration-color: #5fa4dd; text-underline-offset: 3px; }
.over { font: 19px/20px "Liberation Serif", serif; text-decoration: overline; text-decoration-color: #6fbdff; }
.off { color: #737b87; }
.off .ch { color: #737b87; font-size: 16px; }
.ch sup, .ch sub { font-size: 10px; line-height: 10px; }
.ch sup { margin-bottom: 10px; }
.ch sub { margin-top: 10px; }
.off .case { width: 44px; gap: 8px; }
.off .arr { background: #a9adb3; }
.clear { display: flex; align-items: center; gap: 8px; margin-left: 9px; }

.big { display: flex; flex-direction: column; align-items: center; padding-top: 8px; flex: 1; line-height: 20px; gap: 3px; }
.big > .arr { margin-top: 1px; }
.match { flex: none; width: 52px; margin-right: -2px; }
.just { flex: none; width: 56px; }
.pcol { display: grid; grid-template-rows: 28px 28px 28px; gap: 3px; margin-top: 5px; }
.pcol .line { gap: 6px; padding: 0 4px; }
.aligns { display: grid; grid-template-columns: repeat(6, 28px); gap: 2px; height: 27px; }
.aligns button { background: #4e5a6e; border: 1px solid #2c333f; display: grid; place-items: center; }
.aligns .on, .big.on, .line.on { background: #46607b; border: 1px solid #78c2ff; }
.p-spell .body { padding-left: 2px; }
.big.on { flex: none; width: 47px; margin: 5px 0 5px; padding-top: 2px; }
.p-spell .big + .big { padding-right: 2px; }
.p-opt .body { display: grid; grid-template-rows: 28px 28px 28px; gap: 3px; padding: 5px 17px 5px 3px; justify-items: start; }
.p-opt .line { padding: 0 4px; gap: 7px; height: 28px; }
.p-opt .line.on { padding: 0 5px 0 3px; }
.undo { display: flex; align-items: center; gap: 9px; height: 28px; padding-left: 4px; }

/* drawing file tabs */
.ftabs { display: flex; flex: none; height: 37px; padding: 5px 0 0 15px; border-bottom: 5px solid #3b4453; }
.ftab { display: flex; align-items: center; justify-content: space-between; height: 27px; }
.start { width: 165px; padding-left: 24px; background: #313845; color: #b9bcc0; clip-path: path("M0 27C12 24 10 0 22 0H150C162 2 163 15 165 27Z"); }
.ftab.on { width: 172px; margin-left: -5px; padding: 0 29px 0 18px; background: #3b4453; clip-path: path("M0 27C10 22 8 0 20 0H145C158 0 156 24 172 27Z"); }
.add { display: grid; place-items: center; width: 26px; height: 18px; background: #313845; }
.ftabs .add { margin: 5px 0 0 -4px; border-radius: 3px 14px 0 12px; }

/* drawing area */
.canvas { position: relative; flex: 1; min-height: 0; overflow: hidden; background: #212830; }
.grid { position: absolute; inset: 0; }
.viewlabel { position: absolute; left: 2px; top: 5px; font-size: 16px; }
.editor { position: absolute; left: 390px; right: 11px; top: 161px; }
.ruler { height: 36px; background: #383839; border: 1px solid #0d0e10; border-right: 0; overflow: hidden; }
.ruler svg { overflow: hidden; }
.mtext { display: flex; align-items: flex-start; height: 80px; margin-left: 35px; background: #383839; border: 1px solid #0d0e10; border-top: 0; border-right: 0; color: #fff; font: 63px/68px "Liberation Sans", Arial, sans-serif; }
.mtext span { margin-top: -8px; }
.mtext svg { margin: 1px 0 0 -5px; }
.ucs { position: absolute; left: 12px; bottom: 13px; }
.cmd { position: absolute; left: 379px; right: 379px; bottom: 0; height: 34px; display: flex; align-items: center; background: #292f3b; padding-left: 4px; gap: 8px; }
.cmd > button + button { margin-left: 6px; }
.cmdbox { flex: 1; display: flex; align-items: center; gap: 6px; height: 32px; margin-left: -2px; padding: 0 6px 0 8px; background: #bebfc0; border-radius: 2px; }
.cmdbox input { flex: 1; min-width: 0; height: 24px; padding-top: 3px; color: #111; font: 700 15px/20px "Liberation Mono", monospace; }
.mark { position: absolute; right: 98px; bottom: 5px; }
.vscroll { position: absolute; right: 3px; top: 0; bottom: 0; width: 8px; border-right: 1px solid #35c9f0; background: linear-gradient(#bcd1ea 40px, #dbe7f4 88px, #bcd1ea 90px); }

/* layout tabs and status bar */
.status { display: flex; justify-content: space-between; flex: none; height: 35px; border-top: 1px solid #4a5261; }
.ltabs { display: flex; align-items: flex-start; padding-left: 8px; color: #b9bcc0; }
.ltabs a { width: 70px; height: 23px; margin-right: -2px; background: #313845; clip-path: path("M0 0H70C62 2 66 23 56 23H18C8 23 10 2 0 0Z"); line-height: 22px; text-align: center; }
.ltabs .on { margin-right: -4px; background: #3b4453; color: #fff; font-weight: 700; }
.ltabs .add { margin: 3px 0 0 5px; border-radius: 10px 2px 12px 2px; height: 19px; }
.tools { display: flex; gap: 2px; padding: 1px 2px 0 0; height: 32px; }
.grp { display: flex; align-items: center; background: #3b4453; height: 31px; }
.grp button { display: flex; align-items: center; justify-content: center; width: 30px; height: 29px; color: #d8d8d8; }
.grp .on { background: #618fc1; color: #fff; width: 29px; }
.tight { gap: 1px; }
.grp .dd { width: 20px; }
.grp .mon { width: 29px; }
.grp .model { width: 34px; color: #f0f0f0; }
.grp .scale { width: 42px; gap: 5px; color: #f0f0f0; font-size: 14px; }
.sliver { width: 4px; margin: 0 1px; }
```
